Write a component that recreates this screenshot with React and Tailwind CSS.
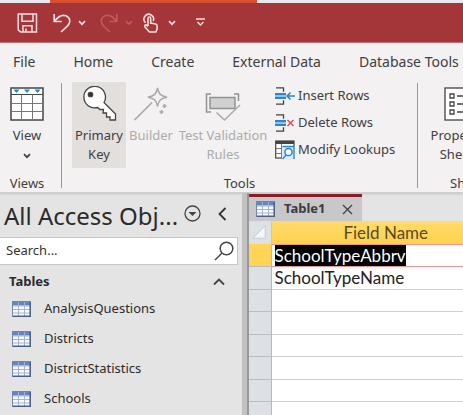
import React from 'react';

const menuTabs = ['File', 'Home', 'Create', 'External Data', 'Database Tools'];
const tables = ['AnalysisQuestions', 'Districts', 'DistrictStatistics', 'Schools'];
const fields = ['SchoolTypeAbbrv', 'SchoolTypeName', '', '', '', '', '', ''];

const Chevron = ({ className }) => (
  <svg className={className} width="8" height="6" viewBox="0 0 8 6" fill="none" stroke="currentColor" strokeWidth="1.7">
    <path d="M1 1.2 4 4.2 7 1.2" />
  </svg>
);

const TableIcon = () => (
  <svg width="19" height="16" viewBox="0 0 19 16" className="shrink-0">
    <rect x="0.5" y="0.5" width="18" height="15" fill="#f8faff" stroke="#7286ae" />
    <rect x="0.5" y="0.5" width="18" height="4" fill="#6484c2" />
    <path d="M1 5h17M1 8.5h17M1 12h17M6.5 1v14M12.5 1v14" stroke="#a3b4d3" fill="none" />
    <path d="M18.2 1v14.2H1" stroke="#4b5f8b" strokeWidth="1.5" fill="none" />
  </svg>
);

const SaveIcon = () => (
  <svg width="21" height="20" viewBox="0 0 21 20" fill="none" stroke="currentColor" strokeWidth="1.5">
    <path d="M1.2 1h18.3v18H3.6L1.2 16.8zM5 1v7.2h11V1M6 19v-6.2h9V19M9 15.5V19" />
  </svg>
);

const UndoIcon = () => (
  <svg width="18" height="20" viewBox="0 0 18 20" fill="none" stroke="currentColor" strokeWidth="1.7">
    <path d="M1.2 1v7.5h7.5M1.5 8.2C5 3.6 9 1.2 13 2.8c4.5 2 4.8 6.8 1.6 10L8 19" />
  </svg>
);

const TouchIcon = () => (
  <svg width="16" height="20" viewBox="0 0 16 20" fill="none" stroke="currentColor" strokeWidth="1.6">
    <path d="M2.5 9.6A4.8 4.8 0 1 1 10.2 8" />
    <path d="M5 13V5.5c0-2 2.7-2 2.7 0V10l5 1c1 .3 1.4 1 1.4 2v3l-1.2 3H6.5L2 14c-.9-1.5.7-2.7 2-1.6L5 13.5" />
  </svg>
);

const ViewIcon = () => (
  <svg width="34" height="34" viewBox="0 0 34 34" fill="none">
    <rect x="1" y="1" width="32" height="32" fill="#fff" stroke="#444" strokeWidth="1.5" />
    <path d="M1 7.5h32" stroke="#444" />
    <path d="M1 16.5h32M1 24.5h32M11.5 7.5V33M22.5 7.5V33" stroke="#777" />
    <path d="M3.5 2.5h6l-3 3.5zM14 2.5h6l-3 3.5zM24.5 2.5h6l-3 3.5z" fill="#2586cf" />
  </svg>
);

const KeyIcon = () => (
  <svg width="36" height="36" viewBox="0 0 36 36" fill="#fff" stroke="#444" strokeWidth="1.3">
    <path d="M23 16.5 34.5 28v6H29V31h-3.5v-4H22l.5-3.5H19l-2.5-2A10.8 10.8 0 1 1 23 16.5z" />
    <circle cx="9.5" cy="8.5" r="2.2" fill="#333" />
  </svg>
);

const WandIcon = () => (
  <svg width="36" height="36" viewBox="0 0 36 36" fill="none" stroke="#a9a9a9" strokeWidth="1.5">
    <path d="M1.5 34 19 16.5" strokeWidth="1.7" />
    <path d="M24.5 2c1.2 6 3 8 9.5 9.2-6.5 1.2-8.3 3.2-9.5 9.2-1.2-6-3-8-9.5-9.2 6.5-1.2 8.300-3.2 9.500-9.2z" />
    <path d="M31.500 18v4M29.500 20h4M28.500 24v4M26.500 26h4" strokeWidth="1.700" />
  </svg>
);

const ValidationIcon = () => (
  <svg width="36" height="36" viewBox="0 0 36 36" fill="none" stroke="#929292" strokeWidth="1.5">
    <path d="M6 8H1.5v18H6M29 8h4.500v7" />
    <rect x="5" y="11.5" width="25" height="11" fill="#d0d0d0" />
    <path d="m35 19-15.500 15-8-7.500" stroke="#aaa" />
  </svg>
);

const RowsIcon = ({ remove }) => (
  <svg width="20" height="18" viewBox="0 0 20 18" fill="none">
    <path d="M1 .8h7.500v4M1 17.200h7.500v-4" stroke="#444" strokeWidth="1.300" />
    <rect x="0" y="6" width="11" height="6" fill="#2f86c8" />
    <path d="M0 9h11" stroke="#8cc4ec" strokeWidth="2" />
    {remove ? (
      <path d="m12.500 6 6 6m0-6-6 6" stroke="#df4d4d" strokeWidth="1.500" />
    ) : (
      <path d="M20 9h-8m3.500-3.500L12 9l3.500 3.500" stroke="#2b83c6" strokeWidth="1.500" />
    )}
  </svg>
);

const LookupIcon = () => (
  <svg width="20" height="20" viewBox="0 0 20 20" fill="none">
    <rect x="0.7" y="1" width="18.300" height="17" fill="#fff" stroke="#444" strokeWidth="1.200" />
    <path d="M1 2.500h18" stroke="#444" strokeWidth="3" />
    <path d="M1 8.500h7M1 13.500h7M6.500 4v14" stroke="#777" />
    <path d="M7 6h13v14H7z" fill="#dcebf7" />
    <path d="M7.500 6.500H19V19M7.500 19.200l4-4.700" stroke="#2684cc" strokeWidth="1.300" />
    <circle cx="13.500" cy="12" r="3.600" fill="#fff" stroke="#2684cc" strokeWidth="1.500" />
  </svg>
);

const SheetIcon = () => (
  <svg width="26" height="34" viewBox="0 0 26 34" fill="none" stroke="#444" strokeWidth="1.3">
    <rect x="1" y="1" width="24" height="32" fill="#fff" />
    <path d="M6 7h4v4H6zM6 15h4v4H6zM6 23h4v4H6zM13 9h9M13 17h9M13 25h9" />
  </svg>
);

const RibbonButton = ({ icon, className, children }) => (
  <button type="button" className={`flex h-[86px] shrink-0 flex-col items-center whitespace-nowrap pt-1 text-center leading-[19px] ${className}`}>
    <span className="mb-1 flex h-9 items-center">{icon}</span>
    {children}
  </button>
);

const TitleBar = () => (
  <header>
    <div className="flex h-[3px] bg-[#e9e8ee]">
      <div className="ml-[50px] w-[207px] bg-[#d95030]" />
    </div>
    <div className="flex h-10 items-center border-b border-[#c4686b] bg-[#a43539] pl-[17px] text-[#f6dede]">
      <button type="button" aria-label="Save"><SaveIcon /></button>
      <button type="button" aria-label="Undo" className="ml-[15px] flex items-center gap-[7px]">
        <UndoIcon />
        <Chevron />
      </button>
      <button type="button" aria-label="Redo" disabled className="ml-[14px] flex items-center gap-[7px] text-[#c05a5c]">
        <span className="-scale-x-100"><UndoIcon /></span>
        <Chevron />
      </button>
      <button type="button" aria-label="Touch mode" className="ml-[10px] flex items-center gap-[9px]">
        <TouchIcon />
        <Chevron />
      </button>
      <button type="button" aria-label="Customize toolbar" className="ml-5">
        <svg width="9" height="9" viewBox="0 0 9 9" fill="none" stroke="currentColor" strokeWidth="1.500">
          <path d="M0 1h9M1.500 4l3 3 3-3" />
        </svg>
      </button>
    </div>
  </header>
);

const Ribbon = () => (
  <section className="border-b border-[#cfcfcf] bg-[#f3f1f1] text-[13px] text-[#404040] shadow-[0_1px_2px_#c4c4c4]">
    <nav className="flex h-[38px] items-center gap-[38px] whitespace-nowrap pl-[13px] text-sm">
      {menuTabs.map((tab) => (
        <a key={tab} href="#">{tab}</a>
      ))}
    </nav>
    <div className="flex h-[111px] pt-px">
      {/* Views */}
      <div className="flex w-[61px] shrink-0 flex-col items-center justify-between pr-[7px] pb-px">
        <RibbonButton icon={<ViewIcon />} className="w-12">
          View
          <Chevron className="mt-2" />
        </RibbonButton>
        <span className="leading-4">Views</span>
      </div>
      <div className="mt-px mb-1 w-px shrink-0 bg-[#979797]" />

      {/* Tools */}
      <div className="flex w-[355px] shrink-0 flex-col justify-between pb-px pl-[10px]">
        <div className="flex">
          <RibbonButton icon={<KeyIcon />} className="w-[54px] bg-[#e2dfdd]">
            Primary<br />Key
          </RibbonButton>
          <RibbonButton icon={<WandIcon />} className="w-[50px] text-[#acacac]">Builder</RibbonButton>
          <RibbonButton icon={<ValidationIcon />} className="w-[94px] text-[#acacac]">
            Test Validation<br />Rules
          </RibbonButton>
          <div className="ml-[5px] flex flex-col whitespace-nowrap leading-[27px]">
            <button type="button" className="flex items-center gap-[3px]"><RowsIcon />Insert Rows</button>
            <button type="button" className="flex items-center gap-[3px]"><RowsIcon remove />Delete Rows</button>
            <button type="button" className="flex items-center gap-[3px]"><LookupIcon />Modify Lookups</button>
          </div>
        </div>
        <span className="pr-[10px] text-center leading-4">Tools</span>
      </div>
      <div className="mt-px mb-1 w-px shrink-0 bg-[#979797]" />

      {/* Show/Hide */}
      <div className="flex w-[110px] shrink-0 flex-col items-start justify-between pb-px pl-3">
        <RibbonButton icon={<SheetIcon />} className="w-[54px]">
          Property<br />Sheet
        </RibbonButton>
        <span className="pl-5 leading-4">Show/Hide</span>
      </div>
    </div>
  </section>
);

const NavigationPane = () => (
  <aside className="w-[242px] shrink-0 text-[#2b2b2b]">
    <div className="flex h-[43px] items-center pl-1">
      <h1 className="w-[180px] whitespace-nowrap text-2xl">All Access Obj...</h1>
      <button type="button" aria-label="Object list" className="-mt-1">
        <svg width="17" height="17" viewBox="0 0 17 17" fill="none" stroke="#444" strokeWidth="1.300">
          <circle cx="8.500" cy="8.500" r="7.500" />
          <path d="M4.500 7h8l-4 4z" fill="#444" stroke="none" />
        </svg>
      </button>
      <button type="button" aria-label="Collapse pane" className="-mt-1 ml-[17px]">
        <svg width="9" height="14" viewBox="0 0 9 14" fill="none" stroke="#333" strokeWidth="1.800">
          <path d="M7.500 1 1.500 7l6 6" />
        </svg>
      </button>
    </div>
    <label className="mr-1 flex h-7 items-center border border-l-0 border-[#c6c6c6] bg-white pr-[3px] pl-[6px]">
      <input type="text" aria-label="Search" placeholder="Search..." className="min-w-0 flex-1 text-[13px] outline-none placeholder:text-[#333]" />
      <svg width="20" height="20" viewBox="0 0 20 20" fill="none" stroke="#444" strokeWidth="1.500">
        <circle cx="12.500" cy="7.500" r="6.300" />
        <path d="M8 12 1 19" />
      </svg>
    </label>
    <button type="button" className="flex h-[29px] w-full items-center justify-between pt-1 pr-[17px] pl-[9px] text-[13px] font-bold">
      Tables
      <svg width="12" height="8" viewBox="0 0 12 8" fill="none" stroke="#444" strokeWidth="1.800">
        <path d="m1 6.500 5-5 5 5" />
      </svg>
    </button>
    <ul className="text-[13px]">
      {tables.map((name) => (
        <li key={name}>
          <a href="#" className="flex h-[30px] items-center gap-[13px] pl-3">
            <TableIcon />
            {name}
          </a>
        </li>
      ))}
    </ul>
  </aside>
);

const TableDesign = () => (
  <main className="min-w-0 flex-1 overflow-hidden">
    <div className="flex h-[27px] w-[113px] items-center border-t-[3px] border-[#8c1d26] bg-[#c8c7c9] pl-[7px] text-[13px] font-bold text-[#3c3c3c]">
      <TableIcon />
      <span className="ml-[9px]">Table1</span>
      <button type="button" aria-label="Close" className="ml-[16px]">
        <svg width="11" height="11" viewBox="0 0 11 11" stroke="#444" strokeWidth="1.300">
          <path d="m1 1 9 9M10 1l-9 9" />
        </svg>
      </button>
    </div>
    <div className="bg-white">
      <table className="w-[251px] table-fixed border-collapse font-['Lato',sans-serif] text-[17px] leading-[21px] text-[#222]">
        <colgroup>
          <col className="w-[22px]" />
          <col />
        </colgroup>
        <thead>
          <tr className="h-[23px]">
            <th aria-label="Select all" className="border-r border-[#c5c9ce] bg-[#dde1e7] p-0">
              <svg width="21" height="21" viewBox="0 0 22 22" className="block">
                <path d="M17 4v13H4z" fill="#f4f6f8" stroke="#c6cace" />
              </svg>
            </th>
            <th className="bg-linear-to-b from-[#ffdb6a] to-[#fdd14e] p-0 font-normal text-[#5a4a24]">Field Name</th>
          </tr>
        </thead>
        <tbody>
          {fields.map((name, i) => (
            <tr key={i} className="odd:h-[22px] even:h-[23px]">
              <td className={`border-r border-b border-r-[#b5b9be] border-b-[#b9bdc2] p-0 ${i === 0 ? 'bg-[#ffd457]' : 'bg-[#dde1e6]'}`} />
              <td className={`border-b p-0 pl-[3px] ${i === 0 ? 'border-t border-[#ef9495]' : 'border-[#d0d0d2]'}`}>
                <span className={i === 0 ? 'block w-fit bg-black text-white' : 'block'}>{name}</span>
              </td>
            </tr>
          ))}
        </tbody>
      </table>
    </div>
  </main>
);

const App = () => (
  <div className="flex h-screen flex-col overflow-hidden bg-[#e5e4e5] font-['Noto_Sans',sans-serif]">
    <TitleBar />
    <Ribbon />
    <div className="flex min-h-0 flex-1 pt-px">
      <NavigationPane />
      <div className="-mt-px w-[7px] shrink-0 border-r-2 border-[#999] bg-[#c2c2c2]" />
      <TableDesign />
    </div>
  </div>
);

export default App;
